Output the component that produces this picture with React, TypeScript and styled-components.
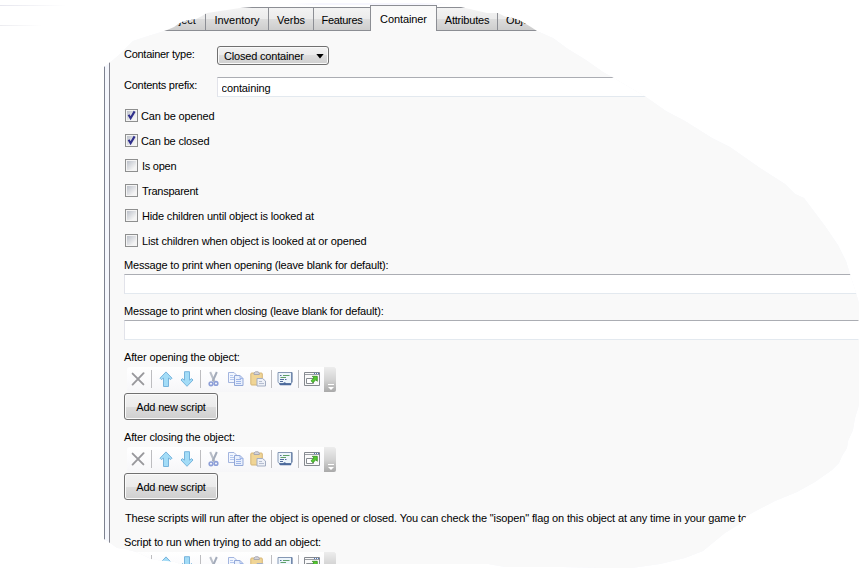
import React from "react";
import styled, { createGlobalStyle } from "styled-components";

const GlobalStyle = createGlobalStyle`
  body { margin: 0; background: #fff; overflow: hidden; }
  * { box-sizing: border-box; }
`;

const Page = styled.main`
  width: 859px;
  height: 569px;
  overflow: hidden;
  font: 11px/14px "Liberation Sans", Arial, sans-serif;
  color: #000;
  background:
    linear-gradient(90deg, #e6e6ee, #fff) 0 5px / 66px 1px no-repeat,
    linear-gradient(90deg, #ececf0, #fff) 0 25px / 42px 1px no-repeat,
    linear-gradient(90deg, #fff, #f6f6fe 20%, #f6f6fe 80%, #fff) 288px 3px / 164px 2px no-repeat,
    #fff;
`;

const Cutout = styled.div`
  height: 569px;
  display: flex;
  flex-direction: column;
  padding-left: 104px;
  clip-path: polygon(
    104px 67px, 109px 63px, 113px 60px, 121px 53px, 127px 47px, 133px 41px, 148px 36px,
    158px 33px, 167px 30px, 174px 27px, 178px 24px, 183px 21.5px, 190px 20px, 196px 19px,
    201px 16.5px, 207px 13px, 227px 10px, 240px 8px, 252px 7px, 290px 4px, 450px 4px,
    461px 7px, 474px 10px, 487px 13px, 498px 13px, 505px 16.5px, 511px 17.5px, 519px 20px,
    526px 24px, 531px 27px, 537px 31px, 553px 38px,
    568px 49px, 586px 60px, 603px 72px, 612px 77px, 646px 97px, 666px 111px, 685px 121px,
    712px 138px, 730px 147px, 760px 168px, 785px 184px, 795px 194px, 804px 198px,
    825px 226px, 838px 245px, 846px 261px, 850px 274px, 856px 293px, 859px 303px,
    859px 405px, 855px 418px, 853px 430px, 848px 441px, 847px 448px, 842px 456px,
    839px 463px, 832px 470px, 815px 482px, 797px 492px, 775px 501px, 752px 513px,
    746px 517px, 738px 525px, 725px 533px, 703px 551px, 685px 558px, 660px 564px,
    632px 568px, 600px 568px, 560px 567px, 505px 567px, 488px 564px, 180px 564px,
    173px 561.5px, 160px 560.5px, 151px 559px, 145px 556px, 136px 552px, 125px 549px,
    117px 548px, 110px 543px, 104px 539px
  );
`;

const TabStrip = styled.nav`
  height: 31px;
  display: flex;
  align-items: flex-end;
  border-bottom: 1px solid #8c8e94;
  flex: none;
`;

const Tab = styled.button<{ $w: number; $active?: boolean; $s?: number; $pad?: number }>`
  width: ${(p) => p.$w}px;
  height: ${(p) => (p.$active ? 26 : 23)}px;
  margin: 0 0 ${(p) => (p.$active ? -1 : 0)}px ${(p) => (p.$active ? -1 : 0)}px;
  padding: ${(p) => (p.$active ? 0 : 2)}px 0 0 ${(p) => p.$pad ?? 0}px;
  border: solid #8c8e94;
  border-width: ${(p) => (p.$active ? "1px 1px 0" : "1px 1px 0 0")};
  background: ${(p) =>
    p.$active ? "#f9f9f9" : "linear-gradient(#f3f3f3 0, #ebebeb 50%, #dddddd 50%, #cdcdcd 100%)"};
  font: inherit;
  letter-spacing: ${(p) => p.$s ?? 0}px;
  color: #000;
  text-align: center;
  white-space: nowrap;
  flex: none;
`;

const Frame = styled.div`
  flex: 1;
  width: 755px;
  padding-left: 4px;
  border-left: 1px solid #7d8290;
  background: #f5f7fd;
`;

const Panel = styled.section`
  height: 100%;
  padding: 15px 0 0 14px;
  border-left: 1px solid #84858f;
  background: #f9f9f9;
  overflow: hidden;
`;

const Field = styled.div<{ $h: number }>`
  display: grid;
  grid-template-columns: 93px 1fr;
  height: ${(p) => p.$h}px;
  align-items: start;
`;

const Label = styled.label<{ $s?: number; $top?: number; $h?: number; $indent?: number }>`
  display: block;
  padding-top: ${(p) => p.$top ?? 0}px;
  padding-left: ${(p) => p.$indent ?? 0}px;
  ${(p) => p.$h && `height: ${p.$h}px;`}
  letter-spacing: ${(p) => p.$s ?? 0}px;
  white-space: nowrap;
`;

const Select = styled.button`
  width: 112px;
  height: 19px;
  display: flex;
  align-items: center;
  justify-content: space-between;
  padding: 1px 4px 0 6px;
  border: 1px solid #707070;
  border-radius: 3px;
  box-shadow: inset 0 0 0 1px #fafafa;
  background: linear-gradient(#f2f2f2 0, #ebebeb 50%, #dddddd 50%, #cfcfcf 100%);
  font: inherit;
  letter-spacing: -0.18px;
  color: #000;
`;

const TextInput = styled.input`
  width: 100%;
  height: 20px;
  display: block;
  padding: 2px 4px 0 3.5px;
  border: 1px solid #e2e3ea;
  border-color: #abadb3 transparent #e3e9ef #e2e3ea;
  background: #fff;
  font: inherit;
  letter-spacing: -0.12px;
  color: #000;
  outline: 0;
`;

const CheckRow = styled.label<{ $s: number; $gap: number }>`
  height: 25px;
  display: flex;
  align-items: center;
  gap: ${(p) => p.$gap}px;
  padding-left: 1px;
  letter-spacing: ${(p) => p.$s}px;
  white-space: nowrap;
`;

const Box = styled.span`
  width: 13px;
  height: 13px;
  display: flex;
  border: 1px solid #8e8f8f;
  background: linear-gradient(135deg, #bcc1ca, #f4f4f4 80%) content-box, #f4f4f4;
  padding: 1px;
  flex: none;
`;

const Check = styled.svg`
  width: 11px;
  height: 11px;
  margin: -1px;
  flex: none;
`;

const Toolbar = styled.div`
  width: 209px;
  height: 25px;
  margin-left: 3px;
  display: flex;
  align-items: center;
  border-radius: 3px 0 0 3px;
  background: linear-gradient(#fff, #fafafc 60%, #f6f6f8);
`;

const Tool = styled.span<{ $w: number }>`
  width: ${(p) => p.$w}px;
  height: 16px;
  margin-bottom: 2px;
  display: flex;
  justify-content: center;
  flex: none;
`;

const Separator = styled.i`
  width: 1px;
  height: 18px;
  margin-bottom: 1px;
  background: #bdbdc0;
  flex: none;
`;

const Overflow = styled.span`
  width: 12px;
  height: 25px;
  display: flex;
  align-items: flex-end;
  justify-content: flex-end;
  padding: 0 1px 1px 0;
  border-radius: 0 2px 2px 0;
  background: linear-gradient(#ededed, #d4d4d4 50%, #a9a9a9);
`;

const ScriptButton = styled.button`
  width: 94px;
  height: 27px;
  margin: 1px 0 10px;
  display: block;
  padding: 1px 0 0;
  border: 1px solid #707070;
  border-radius: 3px;
  box-shadow: inset 0 0 0 1px #fafafa;
  background: linear-gradient(#f2f2f2 0, #ebebeb 50%, #dddddd 50%, #cfcfcf 100%);
  font: inherit;
  letter-spacing: -0.2px;
  color: #000;
`;

const Glyph = ({ children }: { children: React.ReactNode }) => (
  <svg width="16" height="16" viewBox="0 0 16 16" fill="none">{children}</svg>
);

const DeleteIcon = () => (
  <Glyph><path d="M2.6 2.6 13.4 13.4M13.6 2.2 2.6 13.6" stroke="#98989c" strokeWidth="1.9" strokeLinecap="round" /></Glyph>
);
const UpIcon = () => (
  <Glyph><path d="M8 .9 14 7.2 12.6 8.6 10.5 7V15.5H5.5V7L3.4 8.6 2 7.2Z" fill="#a3dcf7" stroke="#78b4dc" /></Glyph>
);
const DownIcon = () => (
  <Glyph><path d="M8 15.3 14 9 12.6 7.6 10.5 9.2V.7H5.5V9.2L3.4 7.6 2 9Z" fill="#a3dcf7" stroke="#78b4dc" /></Glyph>
);
const CutIcon = () => (
  <Glyph>
    <path d="M5.2 1 9.4 10.5" stroke="#b9bec8" strokeWidth="2" />
    <path d="M11.8 1 7.6 10.5" stroke="#a3abba" strokeWidth="2" />
    <circle cx="6" cy="12.8" r="1.8" stroke="#8d9fd8" strokeWidth="1.6" />
    <circle cx="11" cy="12.4" r="1.8" stroke="#8d9fd8" strokeWidth="1.6" />
  </Glyph>
);
const CopyIcon = () => (
  <Glyph>
    <path d="M.5 1.5H6L8.5 4V11.5H.5Z" fill="#f2f6fe" stroke="#a3b5df" />
    <path d="M2 4.5H5M2 6.5H6M2 8.5H6" stroke="#b5c8ee" />
    <path d="M6.5 4.5H12L15 7.5V14.5H6.5Z" fill="#e9f0fd" stroke="#93a8d8" />
    <path d="M12 4.5V7.5H15M8 8.5H13M8 10.5H13M8 12.5H13" stroke="#9fb6e8" />
  </Glyph>
);
const PasteIcon = () => (
  <Glyph>
    <rect x=".8" y="2" width="11.5" height="12" rx="1" fill="#f0d596" stroke="#d6b676" />
    <path d="M4 3.5V2L5.5.8H8L9.3 2V3.5Z" fill="#d5d5dc" stroke="#a9a9b2" />
    <path d="M7 7.5H12.5L15.5 10V15H7Z" fill="#eef1f8" stroke="#a3adc2" />
    <path d="M9 10.5H12M9 12.5H14" stroke="#b5bed1" />
  </Glyph>
);
const ScriptIcon = () => (
  <Glyph>
    <path d="M1 1.5H15V11L14 12.5H3C2 12.5 1 11.5 1 10.5Z" fill="#edf5fc" stroke="#8598b4" />
    <path d="M14.8 1.5V11.5" stroke="#56709c" />
    <path d="M6 4.5H12.5M3.5 6.5H9" stroke="#5fa06b" strokeWidth="1.1" />
    <path d="M3 4.5H4.5M3 8.5H7M8 8.5H9.5M3 10.5H6" stroke="#526c9b" />
    <path d="M2 12.2H6.2C7 10.8 8.4 10.8 9 12.2H14.6L14 14.3H4C3 14.3 2 13.4 2 12.2Z" fill="#4c6a9c" />
  </Glyph>
);
const WindowIcon = () => (
  <Glyph>
    <path d="M.5 1.5H15.5V14.5H.5Z" fill="#fafafa" stroke="#85898f" />
    <path d="M1 3.5H15" stroke="#9a9da3" />
    <path d="M10 2.5H11M12 2.5H13M14 2.5H15" stroke="#4d74b8" />
    <path d="M2.5 7.5H9.5V12.5H2.5Z" fill="#fff" stroke="#868b91" />
    <path d="M8.3 5.3H13.3V10.3L11.8 8.8 9 11.7 7 9.8 9.8 6.9Z" fill="#55c932" stroke="#268311" strokeWidth=".7" />
  </Glyph>
);

const ScriptToolbar = () => (
  <Toolbar>
    <Tool $w={21}><DeleteIcon /></Tool>
    <Tool $w={3} />
    <Separator />
    <Tool $w={27}><UpIcon /></Tool>
    <Tool $w={16}><DownIcon /></Tool>
    <Tool $w={5} />
    <Separator />
    <Tool $w={24}><CutIcon /></Tool>
    <Tool $w={22}><CopyIcon /></Tool>
    <Tool $w={22}><PasteIcon /></Tool>
    <Tool $w={2} />
    <Separator />
    <Tool $w={26}><ScriptIcon /></Tool>
    <Separator />
    <Tool $w={25}><WindowIcon /></Tool>
    <Overflow>
      <svg width="8" height="8" viewBox="0 0 8 8"><path d="M1 1.5H7" stroke="#fff" /><path d="M1 4H7L4 7Z" fill="#fff" /></svg>
    </Overflow>
  </Toolbar>
);

const checks = [
  { text: "Can be opened", on: true, gap: 3, spacing: -0.13 },
  { text: "Can be closed", on: true, gap: 3, spacing: -0.15 },
  { text: "Is open", gap: 4, spacing: -0.25 },
  { text: "Transparent", gap: 4, spacing: -0.25 },
  { text: "Hide children until object is looked at", gap: 4, spacing: -0.17 },
  { text: "List children when object is looked at or opened", gap: 4, spacing: -0.15 },
];

export default function App() {
  return (
    <Page>
      <GlobalStyle />
      <Cutout>
        <TabStrip>
          <Tab $w={46} />
          <Tab $w={56} $pad={5}>Object</Tab>
          <Tab $w={63}>Inventory</Tab>
          <Tab $w={45}>Verbs</Tab>
          <Tab $w={57} $s={-0.3}>Features</Tab>
          <Tab $w={67} $active $s={-0.1}>Container</Tab>
          <Tab $w={61} $s={-0.2}>Attributes</Tab>
          <Tab $w={78}>Object types</Tab>
        </TabStrip>
        <Frame>
          <Panel>
            <Field $h={31}>
              <Label $top={1} $s={-0.27}>Container type:</Label>
              <Select>
                Closed container
                <svg width="8" height="5" viewBox="0 0 8 5"><path d="M.3 0H7.7L4 4.6Z" /></svg>
              </Select>
            </Field>
            <Field $h={26}>
              <Label $top={1} $s={-0.25}>Contents prefix:</Label>
              <TextInput defaultValue="containing" />
            </Field>
            {checks.map((c) => (
              <CheckRow key={c.text} $gap={c.gap} $s={c.spacing}>
                <Box>
                  {c.on && (
                    <Check viewBox="0 0 11 11" fill="none">
                      <path d="M2.6 4.8 4.6 8.2 8.6 1.4" stroke="#30308c" strokeWidth="2.1" />
                    </Check>
                  )}
                </Box>
                {c.text}
              </CheckRow>
            ))}
            <Label $top={5} $h={21} $s={-0.17}>Message to print when opening (leave blank for default):</Label>
            <TextInput />
            <Label $top={10} $h={26} $s={-0.17}>Message to print when closing (leave blank for default):</Label>
            <TextInput />
            <Label $top={10} $h={27} $s={-0.14}>After opening the object:</Label>
            <ScriptToolbar />
            <ScriptButton>Add new script</ScriptButton>
            <Label $h={17} $s={-0.14}>After closing the object:</Label>
            <ScriptToolbar />
            <ScriptButton>Add new script</ScriptButton>
            <Label $top={1} $h={25} $indent={1} $s={-0.134}>
              These scripts will run after the object is opened or closed. You can check the "isopen" flag on this object at any time in your game to
            </Label>
            <Label $h={17} $s={-0.14}>Script to run when trying to add an object:</Label>
            <ScriptToolbar />
          </Panel>
        </Frame>
      </Cutout>
    </Page>
  );
}
